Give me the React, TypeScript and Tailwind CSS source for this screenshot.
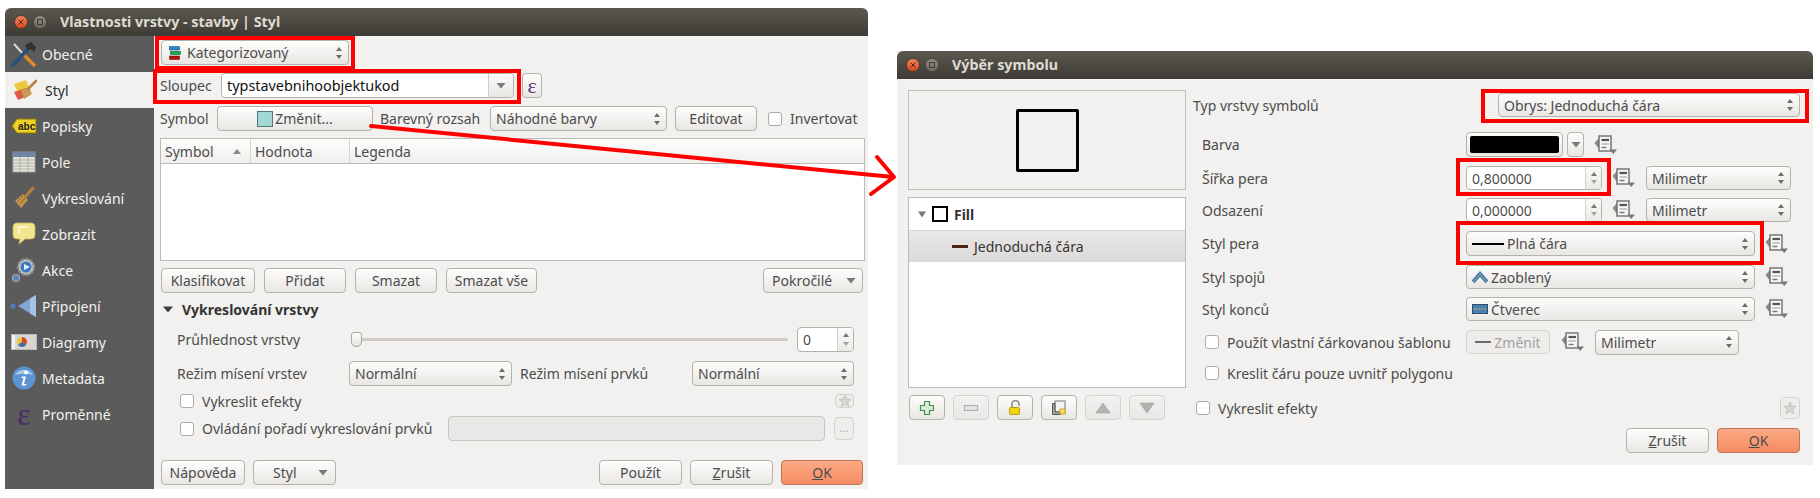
import React from 'react';

const box = "flex items-center shrink-0 border border-[#b5b1ab] rounded-[4px] bg-gradient-to-b from-[#fdfdfc] to-[#e9e7e4] text-[#4c4c4c]";
const btn = `${box} justify-center`;

const Updown = () => (
  <svg width="8" height="14" viewBox="0 0 8 14" className="shrink-0">
    <path d="M4 1 L7 5 H1 Z" fill="#6f6d68" />
    <path d="M4 13 L7 9 H1 Z" fill="#6f6d68" />
  </svg>
);

const DownTri = ({ color = '#7c7a76' }: { color?: string }) => (
  <svg width="10" height="7" viewBox="0 0 10 7" className="shrink-0">
    <path d="M0.5 1 H9.5 L5 6.5 Z" fill={color} />
  </svg>
);

const Combo = ({ className, children }: { className: string; children: React.ReactNode }) => (
  <div className={`${box} justify-between pl-[5px] pr-[5px] whitespace-nowrap ${className}`}>
    <span className="flex items-center gap-[3px]">{children}</span>
    <Updown />
  </div>
);

const Spin = ({ className, value }: { className: string; value: string }) => (
  <div className={`flex shrink-0 border border-[#b5b1ab] rounded-[4px] bg-white overflow-hidden ${className}`}>
    <div className="flex-1 flex items-center pl-[5px] text-[#4c4c4c]">{value}</div>
    <div className="w-[16px] border-l border-[#d4d1cc] bg-gradient-to-b from-[#fafaf9] to-[#eceae7] flex flex-col items-center justify-around py-[3px]">
      <svg width="6" height="4" viewBox="0 0 6 4"><path d="M3 0 L6 4 H0 Z" fill="#77756f" /></svg>
      <svg width="6" height="4" viewBox="0 0 6 4"><path d="M3 4 L6 0 H0 Z" fill="#a5a39e" /></svg>
    </div>
  </div>
);

const Check = ({ className = '' }: { className?: string }) => (
  <div className={`w-[14px] h-[14px] shrink-0 border border-[#aeaaa4] rounded-[3px] bg-white ${className}`} />
);

const DataDefined = ({ className = '' }: { className?: string }) => (
  <svg width="23" height="22" viewBox="0 0 23 22" className={`shrink-0 ${className}`}>
    <path d="M0.5 9 L5 4 V15 Z" fill="#8a8a88" />
    <rect x="5" y="2" width="12" height="15" fill="#f6f6f5" stroke="#6e6e6c" strokeWidth="1.4" />
    <path d="M7.5 6 H15" stroke="#555" strokeWidth="2.2" />
    <path d="M7.5 10 H15" stroke="#999" strokeWidth="1" />
    <path d="M7.5 13.5 H12.5" stroke="#777" strokeWidth="1.4" />
    <path d="M15.5 15.5 H23 L19.2 20 Z" fill="#777" />
  </svg>
);

const StarBtn = ({ className }: { className: string }) => (
  <div className={`flex items-center justify-center shrink-0 border border-[#d5d2cd] rounded-[4px] bg-[#efedeb] ${className}`}>
    <svg width="14" height="14" viewBox="0 0 14 14">
      <path d="M7 1 L8.8 5 L13 5.4 L9.8 8.2 L10.8 12.6 L7 10.3 L3.2 12.6 L4.2 8.2 L1 5.4 L5.2 5 Z" fill="#d6d5d2" stroke="#b4b3b0" strokeWidth="0.6" />
    </svg>
  </div>
);

const Dots = ({ title }: { title: string }) => (
  <div className="h-[28px] shrink-0 bg-gradient-to-b from-[#5c5850] to-[#3d3b35] rounded-t-[6px] flex items-center pl-[9px] gap-[5px]">
    <div className="w-[14px] h-[14px] rounded-full bg-gradient-to-b from-[#f2845a] to-[#d9481c] border border-[#5b3a2a] flex items-center justify-center">
      <svg width="6" height="6" viewBox="0 0 6 6"><path d="M0.5 0.5 L5.5 5.5 M5.5 0.5 L0.5 5.5" stroke="#4a2a1a" strokeWidth="1" /></svg>
    </div>
    <div className="w-[14px] h-[14px] rounded-full bg-gradient-to-b from-[#8f8c84] to-[#6e6b64] border border-[#4a4842] flex items-center justify-center">
      <div className="w-[6px] h-[6px] border border-[#3f3d38]" />
    </div>
    <span className="ml-[8px] font-bold text-[14.3px] text-[#dfdbd2]">{title}</span>
  </div>
);

const icons: Record<string, React.ReactNode> = {
  tools: (
    <svg width="26" height="26" viewBox="0 0 26 26">
      <path d="M3 3 L14 15" stroke="#d9d9d6" strokeWidth="2" />
      <path d="M14 15 L23 24" stroke="#e08a2c" strokeWidth="3.4" strokeLinecap="round" />
      <path d="M2 24 L18 7" stroke="#27517f" strokeWidth="3.4" strokeLinecap="round" />
      <path d="M14 4 L20 1 L25 6 L23 11 L20 8 L17 9 Z" fill="#33312e" />
    </svg>
  ),
  style: (
    <svg width="26" height="26" viewBox="0 0 26 26">
      <path d="M3 7 L15 3 L19 12 L7 16 Z" fill="#e9c93d" />
      <path d="M3 15 L15 11 L19 18 L7 23 Z" fill="#e0574a" />
      <path d="M10 13 L18 10 L21 17 L13 22 Z" fill="#c99a56" />
      <path d="M17 12 L25 4" stroke="#b9823f" strokeWidth="2.6" strokeLinecap="round" />
    </svg>
  ),
  label: (
    <svg width="26" height="16" viewBox="0 0 26 16">
      <path d="M6 1 H25 V15 H6 L1 8 Z" fill="#f0d020" stroke="#8a7a10" strokeWidth="1" />
      <text x="7" y="12" fontSize="10" fontWeight="700" fontFamily="Liberation Sans, sans-serif" fill="#222">abc</text>
    </svg>
  ),
  table: (
    <svg width="24" height="22" viewBox="0 0 24 22">
      <rect x="1" y="1" width="22" height="20" fill="#e4e3dc" stroke="#a8a89e" strokeWidth="0.8" />
      <rect x="1" y="1" width="22" height="5" fill="#6f87a3" />
      <path d="M1 9 H23 M1 12 H23 M1 15 H23 M1 18 H23" stroke="#b3b3aa" strokeWidth="1" />
      <path d="M8 6 V21 M16 6 V21" stroke="#b3b3aa" strokeWidth="1" />
    </svg>
  ),
  brush: (
    <svg width="24" height="24" viewBox="0 0 24 24">
      <path d="M3 15 L11 8 L16 14 L9 22 Z" fill="#c2924f" />
      <path d="M5 16 L11 10 M8 18 L13 12" stroke="#93662f" strokeWidth="1" />
      <path d="M14 10 L21 2" stroke="#b8803a" strokeWidth="3" strokeLinecap="round" />
    </svg>
  ),
  bubble: (
    <svg width="24" height="24" viewBox="0 0 24 24">
      <path d="M5 1 H19 Q23 1 23 5 V13 Q23 17 19 17 H13 L7 22 L8 17 H5 Q1 17 1 13 V5 Q1 1 5 1 Z" fill="#f1e58e" stroke="#c9bb5a" strokeWidth="0.8" />
      <path d="M6 4 H16 V6 H8 V12 H6 Z" fill="#fbf6cf" />
    </svg>
  ),
  action: (
    <svg width="26" height="26" viewBox="0 0 26 26">
      <circle cx="15" cy="10" r="8" fill="#c6c6c6" stroke="#8c8c8c" strokeWidth="2.4" strokeDasharray="3 1.6" />
      <circle cx="15" cy="10" r="5.5" fill="#3c7ac0" />
      <path d="M13 7 L19 10 L13 13 Z" fill="#e6eef8" />
      <circle cx="5" cy="21" r="3.5" fill="#5a86bb" stroke="#a8a8a8" strokeWidth="1.2" />
    </svg>
  ),
  join: (
    <svg width="28" height="24" viewBox="0 0 28 24">
      <circle cx="3" cy="12" r="2.6" fill="#4e7fb8" />
      <path d="M8 12 L26 1 V23 Z" fill="#7fa6d4" />
      <path d="M20 4.5 L26 1 V23 L20 19.5 Z" fill="#a5c3e4" />
    </svg>
  ),
  diagram: (
    <svg width="26" height="16" viewBox="0 0 26 16">
      <rect x="0.5" y="0.5" width="25" height="15" fill="#d7d6d2" stroke="#bbb" />
      <circle cx="11" cy="8" r="5" fill="#e8c83a" />
      <path d="M11 8 V3 A5 5 0 0 1 15 11 Z" fill="#d8432e" />
      <path d="M11 8 L15 11 A5 5 0 0 1 7 11 Z" fill="#3d6cb3" />
      <rect x="1" y="1" width="3" height="14" fill="#f0f0ee" />
    </svg>
  ),
  info: (
    <svg width="24" height="24" viewBox="0 0 24 24">
      <circle cx="12" cy="12" r="11.5" fill="#5b93d3" />
      <path d="M3 9 A10 9 0 0 1 21 9 A20 12 0 0 0 3 9 Z" fill="#a8c9ec" />
      <circle cx="14" cy="6.5" r="2" fill="#fff" />
      <path d="M9.5 10.5 H14 L12 18 H14.5 L14 19.5 H9.5 L11.5 12 H9.5 Z" fill="#fff" />
    </svg>
  ),
};

const side: { label: string; icon?: string }[] = [
  { label: 'Obecné', icon: 'tools' },
  { label: 'Styl', icon: 'style' },
  { label: 'Popisky', icon: 'label' },
  { label: 'Pole', icon: 'table' },
  { label: 'Vykreslování', icon: 'brush' },
  { label: 'Zobrazit', icon: 'bubble' },
  { label: 'Akce', icon: 'action' },
  { label: 'Připojení', icon: 'join' },
  { label: 'Diagramy', icon: 'diagram' },
  { label: 'Metadata', icon: 'info' },
  { label: 'Proměnné' },
];

const LayerWindow = () => (
  <div className="w-[863px] h-[481px] ml-[5px] mt-[8px] shrink-0 flex flex-col bg-[#f2f1ef]">
    <Dots title="Vlastnosti vrstvy - stavby | Styl" />
    <div className="flex-1 flex min-h-0">
      <div className="w-[149px] shrink-0 bg-[#5b5b5b] flex flex-col">
        {side.map((s) => (
          <div
            key={s.label}
            className={`h-[36px] flex items-center pl-[5px] ${s.label === 'Styl' ? 'bg-[#f2f1ef] text-[#2c2c2c]' : 'text-[#f2f1ef]'}`}
          >
            <div className="w-[28px] flex justify-center shrink-0">
              {s.icon ? icons[s.icon] : <span className="font-['Liberation_Serif',serif] text-[32px] leading-none text-[#4d2a66]">ε</span>}
            </div>
            <span className={s.label === 'Styl' ? 'ml-[7px]' : 'ml-[4px]'}>{s.label}</span>
          </div>
        ))}
      </div>

      <div className="flex-1 flex flex-col pl-[6px] pr-[3px] min-w-0">
        <Combo className="mt-[4px] h-[25px] w-[188px] ml-[1px]">
          <svg width="12" height="14" viewBox="0 0 12 14" className="mr-[3px] ml-[2px]">
            <rect x="0.5" y="0.5" width="10" height="3.5" fill="#2a86c8" stroke="#0f4f80" strokeWidth="0.5" />
            <rect x="1.5" y="5.2" width="10" height="3.5" fill="#18a34f" stroke="#0d6b33" strokeWidth="0.5" />
            <rect x="0.5" y="10" width="10" height="3.5" fill="#b51010" stroke="#700" strokeWidth="0.5" />
          </svg>
          Kategorizovaný
        </Combo>

        <div className="mt-[8px] h-[25px] flex items-center">
          <span className="w-[61px] text-[#4c4c4c]">Sloupec</span>
          <div className="w-[293px] h-[25px] flex border border-[#b5b1ab] rounded-[4px] bg-white overflow-hidden">
            <div className="flex-1 flex items-center pl-[5px] text-[14.4px] text-[#111]">typstavebnihoobjektukod</div>
            <div className="w-[25px] border-l border-[#cfccc7] bg-gradient-to-b from-[#fbfbfa] to-[#e9e7e4] flex items-center justify-center">
              <DownTri />
            </div>
          </div>
          <div className={`${btn} ml-[8px] w-[20px] h-[25px]`}>
            <span className="font-['Liberation_Serif',serif] text-[22px] leading-none text-[#5b3a78]">ε</span>
          </div>
        </div>

        <div className="mt-[8px] h-[25px] flex items-center">
          <span className="w-[57px] text-[#4c4c4c]">Symbol</span>
          <div className={`${btn} w-[156px] h-[25px] gap-[2px]`}>
            <div className="w-[16px] h-[16px] bg-[#a4d8d6] border border-[#4f7a78]" />
            Změnit...
          </div>
          <span className="ml-[7px] w-[110px] text-[#4c4c4c] whitespace-nowrap">Barevný rozsah</span>
          <Combo className="w-[177px] h-[25px]">Náhodné barvy</Combo>
          <div className={`${btn} ml-[8px] w-[82px] h-[25px]`}>Editovat</div>
          <Check className="ml-[11px]" />
          <span className="ml-[8px] text-[#4c4c4c]">Invertovat</span>
        </div>

        <div className="mt-[7px] h-[123px] w-[705px] border border-[#bdbab5] bg-white flex flex-col shrink-0">
          <div className="h-[25px] flex border-b border-[#bdbab5] bg-gradient-to-b from-[#fdfdfc] to-[#f0efed] text-[#4c4c4c]">
            <div className="w-[90px] flex items-center justify-between pl-[4px] pr-[9px] border-r border-[#d8d5d1]">
              Symbol
              <svg width="8" height="5" viewBox="0 0 8 5"><path d="M4 0 L8 5 H0 Z" fill="#8b8985" /></svg>
            </div>
            <div className="w-[99px] flex items-center pl-[4px] border-r border-[#d8d5d1]">Hodnota</div>
            <div className="flex-1 flex items-center pl-[4px]">Legenda</div>
          </div>
        </div>

        <div className="mt-[7px] h-[25px] flex items-center pl-[1px] pr-[2px]">
          <div className={`${btn} w-[94px] h-[25px]`}>Klasifikovat</div>
          <div className={`${btn} ml-[9px] w-[82px] h-[25px]`}>Přidat</div>
          <div className={`${btn} ml-[9px] w-[82px] h-[25px]`}>Smazat</div>
          <div className={`${btn} ml-[9px] w-[91px] h-[25px]`}>Smazat vše</div>
          <div className={`${box} ml-auto w-[100px] h-[25px] justify-between pl-[8px] pr-[6px]`}>Pokročilé <DownTri /></div>
        </div>

        <div className="mt-[4px] h-[24px] flex items-center pl-[3px]">
          <svg width="10" height="7" viewBox="0 0 10 7"><path d="M0 0.5 H10 L5 6.5 Z" fill="#3d3d3d" /></svg>
          <span className="ml-[9px] font-bold text-[#333]">Vykreslování vrstvy</span>
        </div>

        <div className="mt-[6px] h-[25px] flex items-center pl-[17px]">
          <span className="w-[174px] text-[#4c4c4c] whitespace-nowrap">Průhlednost vrstvy</span>
          <div className="flex-1 relative h-[3px] bg-[#cfccc7] rounded-full">
            <div className="absolute left-0 -top-[6px] w-[11px] h-[15px] border border-[#aaa7a1] rounded-t-[3px] rounded-b-[5px] bg-gradient-to-b from-[#fdfdfc] to-[#e6e4e1]" />
          </div>
          <Spin className="ml-[9px] mr-[11px] w-[57px] h-[25px]" value="0" />
        </div>

        <div className="mt-[9px] h-[25px] flex items-center pl-[17px]">
          <span className="w-[172px] text-[#4c4c4c] whitespace-nowrap">Režim mísení vrstev</span>
          <Combo className="w-[163px] h-[25px]">Normální</Combo>
          <span className="ml-[8px] w-[172px] text-[#4c4c4c] whitespace-nowrap">Režim mísení prvků</span>
          <Combo className="w-[162px] h-[25px]">Normální</Combo>
        </div>

        <div className="mt-[5px] h-[20px] flex items-center pl-[20px]">
          <Check />
          <span className="ml-[8px] text-[#4c4c4c]">Vykreslit efekty</span>
          <StarBtn className="ml-auto mr-[11px] w-[19px] h-[14px]" />
        </div>

        <div className="mt-[5px] h-[25px] flex items-center pl-[20px]">
          <Check />
          <span className="ml-[8px] w-[246px] text-[#4c4c4c] whitespace-nowrap">Ovládání pořadí vykreslování prvků</span>
          <div className="w-[377px] h-[25px] border border-[#c9c6c1] rounded-[4px] bg-[#e9e8e6]" />
          <div className="ml-[9px] w-[20px] h-[23px] flex items-center justify-center border border-[#d5d2cd] rounded-[4px] bg-[#efedeb] text-[#a9a7a3] text-[11px]">...</div>
        </div>

        <div className="mt-[19px] h-[25px] flex items-center pl-[1px] pr-[2px]">
          <div className={`${btn} w-[84px] h-[25px]`}>Nápověda</div>
          <div className={`${box} ml-[8px] w-[83px] h-[25px] justify-between pl-[19px] pr-[7px]`}>Styl <DownTri /></div>
          <div className={`${btn} ml-auto w-[83px] h-[25px]`}>Použít</div>
          <div className={`${btn} ml-[8px] w-[83px] h-[25px]`}><span><u>Z</u>rušit</span></div>
          <div className="ml-[8px] w-[82px] h-[25px] flex items-center justify-center shrink-0 border border-[#b8765a] rounded-[4px] bg-gradient-to-b from-[#fba983] to-[#f58c63] text-[#4c4c4c]"><span><u>O</u>K</span></div>
        </div>
      </div>
    </div>
  </div>
);

const SmallBtn = ({ disabled, children }: { disabled?: boolean; children: React.ReactNode }) => (
  <div className={`w-[36px] h-[25px] flex items-center justify-center rounded-[4px] border bg-gradient-to-b ${disabled ? 'border-[#d5d2cd] from-[#f3f2f0] to-[#e9e7e5]' : 'border-[#b5b1ab] from-[#fdfdfc] to-[#e9e7e4]'}`}>
    {children}
  </div>
);

const label = "text-[#4c4c4c] whitespace-nowrap";

const SymbolWindow = () => (
  <div className="w-[916px] h-[414px] ml-[29px] mt-[51px] shrink-0 flex flex-col bg-[#f2f1ef]">
    <Dots title="Výběr symbolu" />
    <div className="flex-1 flex pl-[11px]">
      <div className="w-[278px] shrink-0 flex flex-col">
        <div className="mt-[11px] h-[100px] border border-[#c3c0bb] flex items-center justify-center">
          <div className="w-[63px] h-[63px] border-[3px] border-black rounded-[2px]" />
        </div>
        <div className="mt-[7px] h-[191px] border border-[#bdbab5] bg-white flex flex-col">
          <div className="h-[32px] flex items-center pl-[9px]">
            <svg width="8" height="7" viewBox="0 0 8 7"><path d="M0 0.5 H8 L4 6.5 Z" fill="#7c7a76" /></svg>
            <div className="ml-[6px] w-[16px] h-[16px] border-2 border-black bg-white" />
            <span className="ml-[6px] font-bold text-[#333]">Fill</span>
          </div>
          <div className="h-[32px] flex items-center pl-[43px] border-t border-[#d6d4d0] bg-gradient-to-b from-[#e9e8e6] to-[#dcdad8] text-[#333]">
            <div className="w-[16px] h-[3px] bg-[#4e2415]" />
            <span className="ml-[6px]">Jednoduchá čára</span>
          </div>
        </div>
        <div className="mt-[7px] flex gap-[8px] pl-[1px]">
          <SmallBtn>
            <svg width="16" height="16" viewBox="0 0 16 16"><path d="M5.5 1.5 H10.5 V5.5 H14.5 V10.5 H10.5 V14.5 H5.5 V10.5 H1.5 V5.5 H5.5 Z" fill="#d8ecd4" stroke="#4f8a4f" strokeWidth="1.2" /></svg>
          </SmallBtn>
          <SmallBtn disabled>
            <svg width="14" height="6" viewBox="0 0 14 6"><rect x="0.5" y="0.5" width="13" height="5" fill="#e4e3e1" stroke="#aaa" /></svg>
          </SmallBtn>
          <SmallBtn>
            <svg width="14" height="16" viewBox="0 0 14 16">
              <path d="M4 7 V4 A3.5 3.5 0 0 1 11 4 V6" fill="none" stroke="#8a8a86" strokeWidth="1.6" />
              <rect x="1.5" y="7.5" width="10" height="7" rx="1" fill="#f0d40c" stroke="#b99a10" />
            </svg>
          </SmallBtn>
          <SmallBtn>
            <svg width="16" height="16" viewBox="0 0 16 16">
              <rect x="4" y="1" width="10" height="11" fill="#f3f3f1" stroke="#777" />
              <path d="M1.5 3.5 H4 V12 H10 V14.5 H1.5 Z" fill="#a8a8a4" stroke="#555" />
              <rect x="9" y="9" width="5" height="5" fill="#f3dc6a" stroke="#c9a521" />
            </svg>
          </SmallBtn>
          <SmallBtn disabled>
            <svg width="16" height="12" viewBox="0 0 16 12"><path d="M8 1 L15 11 H1 Z" fill="#b3b2af" stroke="#9b9a97" strokeWidth="0.6" /></svg>
          </SmallBtn>
          <SmallBtn disabled>
            <svg width="16" height="12" viewBox="0 0 16 12"><path d="M8 11 L15 1 H1 Z" fill="#b3b2af" stroke="#9b9a97" strokeWidth="0.6" /></svg>
          </SmallBtn>
        </div>
      </div>

      <div className="ml-[7px] flex-1 flex flex-col pr-[13px] min-w-0">
        <div className="mt-[14px] h-[24px] flex items-center">
          <span className={`w-[305px] ${label}`}>Typ vrstvy symbolů</span>
          <Combo className="w-[302px] h-[24px]">Obrys: Jednoduchá čára</Combo>
        </div>

        <div className="mt-[15px] h-[25px] flex items-center pl-[9px]">
          <span className={`w-[264px] ${label}`}>Barva</span>
          <div className={`${btn} w-[97px] h-[25px] p-[3px]`}><div className="w-full h-full bg-black rounded-[2px]" /></div>
          <div className={`${btn} ml-[4px] w-[17px] h-[25px]`}><DownTri /></div>
          <DataDefined className="ml-[10px]" />
        </div>

        <div className="mt-[9px] h-[24px] flex items-center pl-[9px]">
          <span className={`w-[264px] ${label}`}>Šířka pera</span>
          <Spin className="w-[136px] h-[24px]" value="0,800000" />
          <DataDefined className="ml-[10px]" />
          <Combo className="ml-[11px] w-[145px] h-[24px]">Milimetr</Combo>
        </div>

        <div className="mt-[8px] h-[24px] flex items-center pl-[9px]">
          <span className={`w-[264px] ${label}`}>Odsazení</span>
          <Spin className="w-[136px] h-[24px]" value="0,000000" />
          <DataDefined className="ml-[10px]" />
          <Combo className="ml-[11px] w-[145px] h-[24px]">Milimetr</Combo>
        </div>

        <div className="mt-[9px] h-[25px] flex items-center pl-[9px]">
          <span className={`w-[264px] ${label}`}>Styl pera</span>
          <Combo className="w-[289px] h-[25px]"><span className="w-[32px] h-[2px] bg-black" />Plná čára</Combo>
          <DataDefined className="ml-[10px]" />
        </div>

        <div className="mt-[9px] h-[24px] flex items-center pl-[9px]">
          <span className={`w-[264px] ${label}`}>Styl spojů</span>
          <Combo className="w-[289px] h-[24px]">
            <svg width="16" height="12" viewBox="0 0 16 12">
              <path d="M1 11 L8 3 L15 11" fill="none" stroke="#4a7fb0" strokeWidth="4" />
              <path d="M1 11 L8 3 L15 11" fill="none" stroke="#c9c86a" strokeWidth="1" strokeDasharray="1.5 1" />
            </svg>
            Zaoblený
          </Combo>
          <DataDefined className="ml-[10px]" />
        </div>

        <div className="mt-[8px] h-[24px] flex items-center pl-[9px]">
          <span className={`w-[264px] ${label}`}>Styl konců</span>
          <Combo className="w-[289px] h-[24px]">
            <svg width="16" height="10" viewBox="0 0 16 10">
              <rect x="0.5" y="0.5" width="15" height="9" fill="#4a7fb0" stroke="#2b4d70" />
              <path d="M2 5 H14" stroke="#c9c86a" strokeWidth="1" strokeDasharray="1.5 1" />
            </svg>
            Čtverec
          </Combo>
          <DataDefined className="ml-[10px]" />
        </div>

        <div className="mt-[9px] h-[24px] flex items-center pl-[12px]">
          <Check />
          <span className={`ml-[8px] w-[239px] ${label}`}>Použít vlastní čárkovanou šablonu</span>
          <div className="w-[84px] h-[24px] shrink-0 flex items-center justify-center gap-[3px] border border-[#d5d2cd] rounded-[4px] bg-[#efedeb] text-[#a3a19d]">
            <span className="w-[16px] h-[2px] bg-[#6b6b69]" />Změnit
          </div>
          <DataDefined className="ml-[11px]" />
          <Combo className="ml-[11px] w-[144px] h-[25px]">Milimetr</Combo>
        </div>

        <div className="mt-[7px] h-[24px] flex items-center pl-[12px]">
          <Check />
          <span className={`ml-[8px] ${label}`}>Kreslit čáru pouze uvnitř polygonu</span>
        </div>

        <div className="mt-[12px] h-[22px] flex items-center pl-[3px] pr-0">
          <Check />
          <span className={`ml-[8px] ${label}`}>Vykreslit efekty</span>
          <StarBtn className="ml-auto w-[20px] h-[22px]" />
        </div>

        <div className="mt-[9px] h-[25px] flex items-center justify-end gap-[8px]">
          <div className={`${btn} w-[83px] h-[25px]`}><span><u>Z</u>rušit</span></div>
          <div className="w-[83px] h-[25px] flex items-center justify-center shrink-0 border border-[#b8765a] rounded-[4px] bg-gradient-to-b from-[#fba983] to-[#f58c63] text-[#4c4c4c]"><span><u>O</u>K</span></div>
        </div>
      </div>
    </div>
  </div>
);

export default function App() {
  return (
    <div className="relative w-[1820px] h-[498px] bg-white flex items-start font-['Noto_Sans',sans-serif] text-[14px] overflow-hidden">
      <LayerWindow />
      <SymbolWindow />

      <div className="absolute left-[155px] top-[36px] w-[200px] h-[34px] border-4 border-[#f00]" />
      <div className="absolute left-[153px] top-[69px] w-[368px] h-[35px] border-4 border-[#f00]" />
      <div className="absolute left-[1481px] top-[89px] w-[328px] h-[34px] border-4 border-[#f00]" />
      <div className="absolute left-[1456px] top-[158px] w-[155px] h-[38px] border-4 border-[#f00]" />
      <div className="absolute left-[1456px] top-[221px] w-[308px] h-[44px] border-4 border-[#f00]" />

      <svg width="1820" height="498" viewBox="0 0 1820 498" className="absolute left-0 top-0 pointer-events-none">
        <path d="M371 126 L893 177" stroke="#f00" strokeWidth="4" strokeLinecap="round" />
        <path d="M877 157 L894 177 L871 194" fill="none" stroke="#f00" strokeWidth="4" strokeLinecap="round" strokeLinejoin="round" />
      </svg>
    </div>
  );
}
